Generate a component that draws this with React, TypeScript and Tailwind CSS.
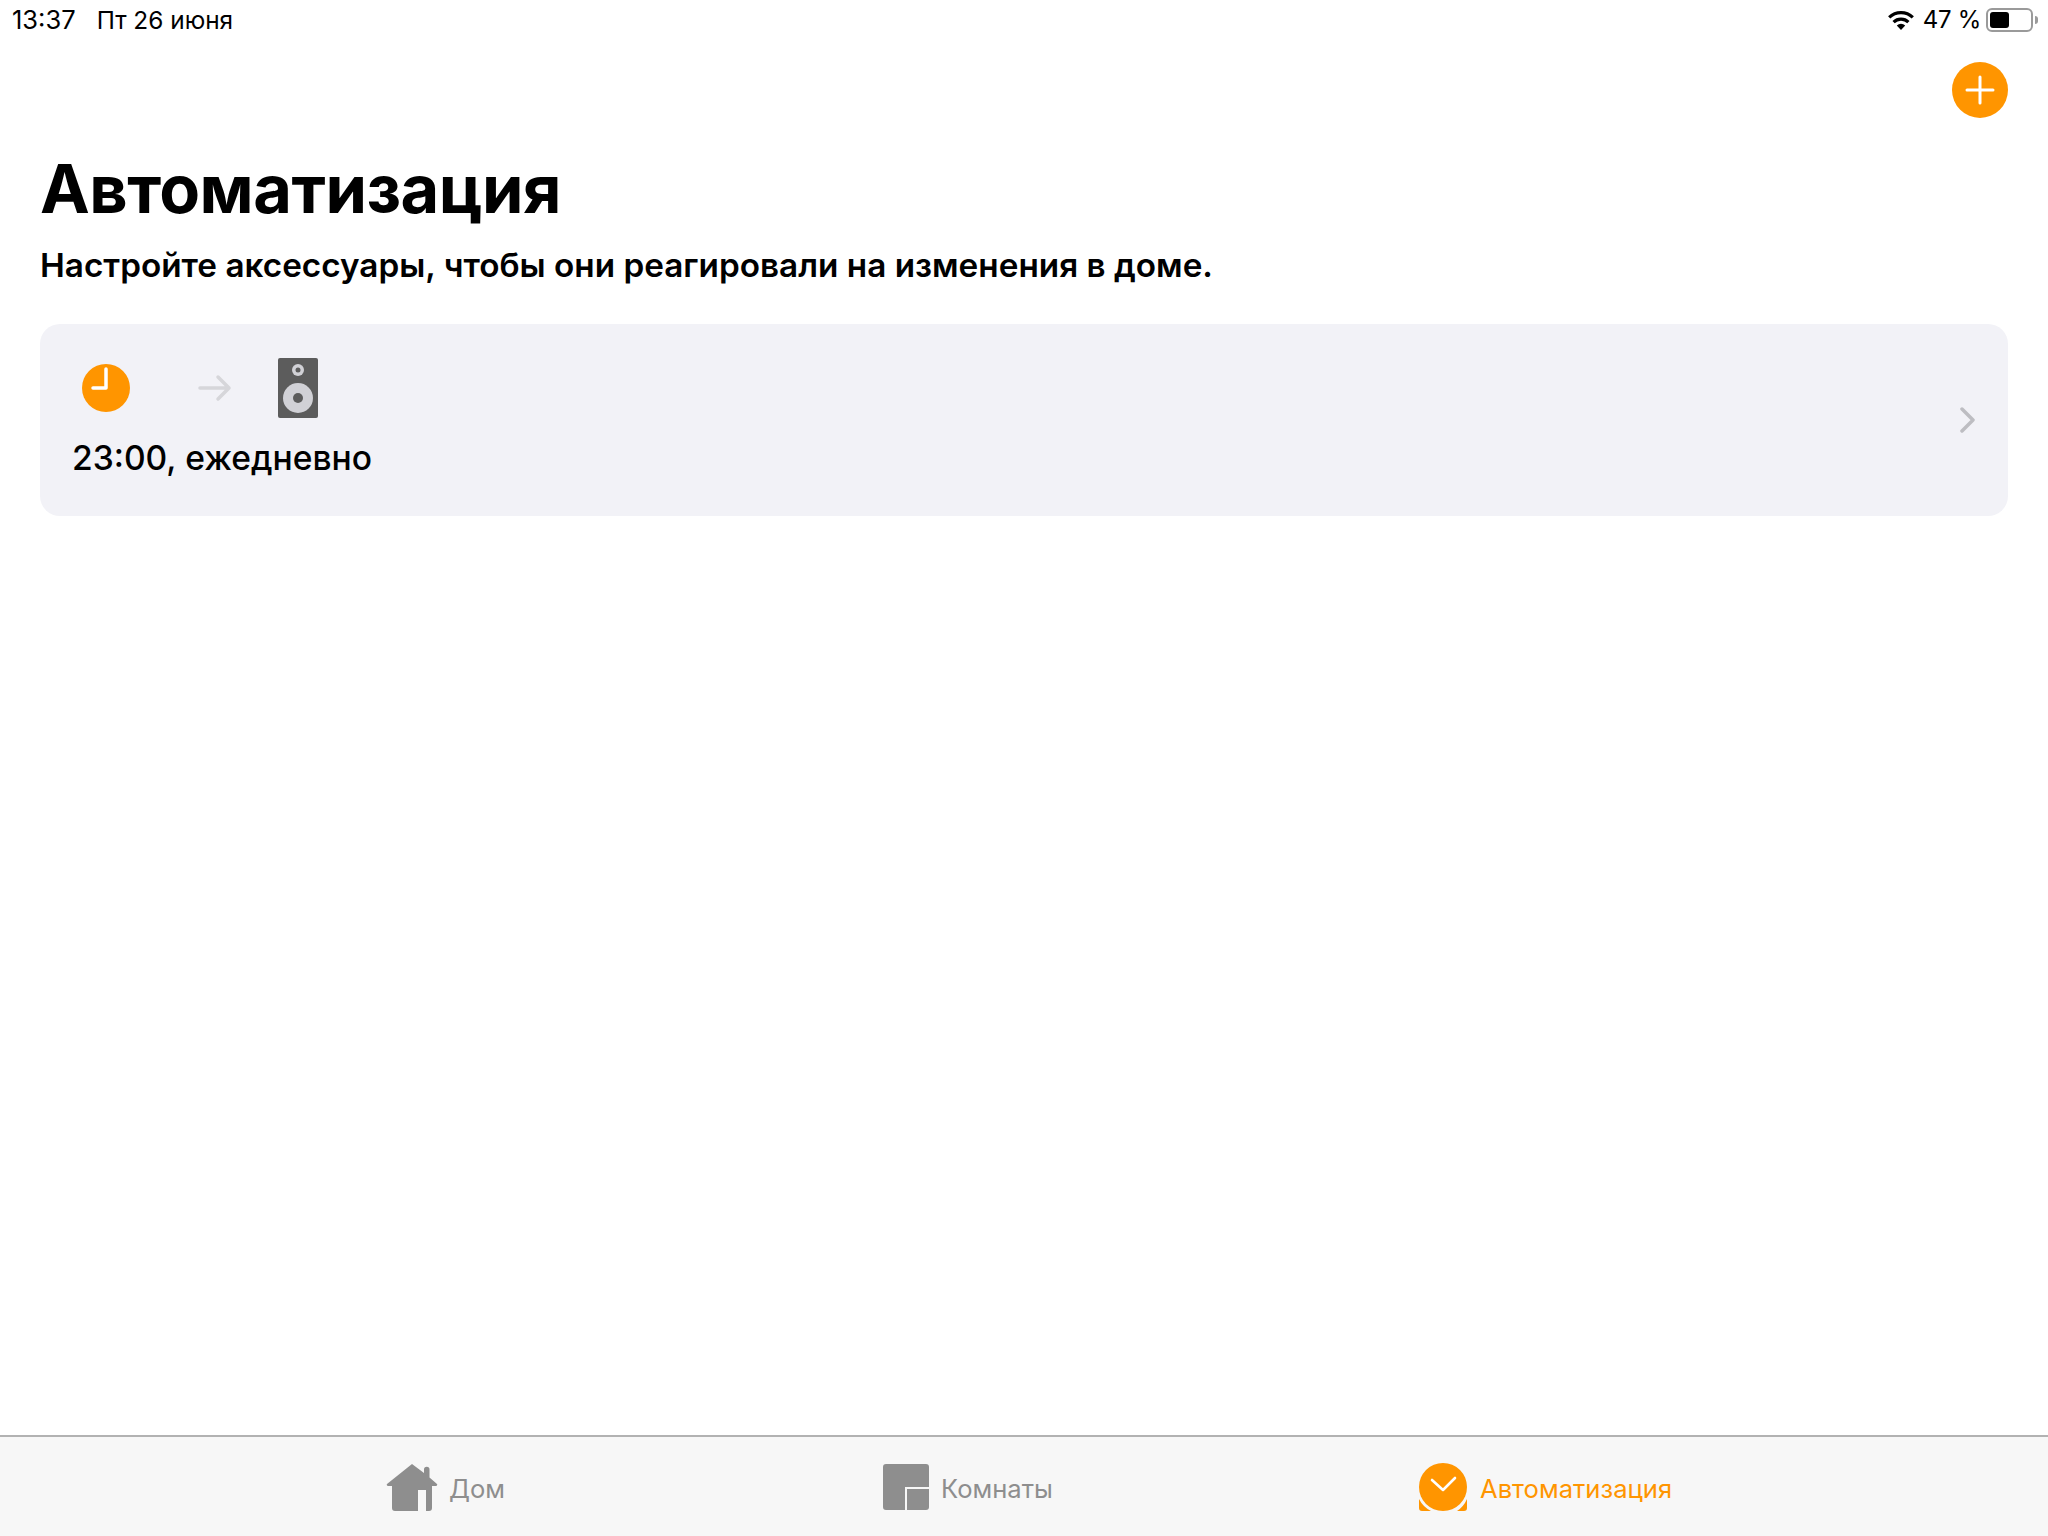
import React from 'react';

const font = { fontFamily: 'Inter, "Liberation Sans", sans-serif' };

const StatusBar = () => (
  <div className="flex h-[40px] items-center justify-between pl-[12px] pr-[10px] leading-[40px] text-black">
    <div className="flex items-center gap-[21px]">
      <span className="text-[25.5px]">13:37</span>
      <span className="text-[24.4px]">Пт 26 июня</span>
    </div>
    <div className="flex items-center">
      <svg width="28" height="22" viewBox="0 0 28 22" className="mr-[8px]">
        <path d="M14 21l-4.2-4.6a6 6 0 0 1 8.4 0z" fill="#000" />
        <path d="M6.6 13.2a10.6 10.6 0 0 1 14.8 0" fill="none" stroke="#000" strokeWidth="3.2" />
        <path d="M2.2 8.4a17 17 0 0 1 23.6 0" fill="none" stroke="#000" strokeWidth="3.2" />
      </svg>
      <span className="text-[24px] tracking-[-0.3px]">47 %</span>
      <div className="ml-[5px] flex h-[24px] w-[47px] items-center rounded-[6px] border-2 border-[#9a9a9a] p-[2px]">
        <div className="h-full w-[19px] rounded-[3px] bg-black" />
      </div>
      <div className="ml-[2px] h-[8px] w-[3px] rounded-r-[3px] bg-[#9a9a9a]" />
    </div>
  </div>
);

const HomeIcon = () => (
  <svg width="52" height="48" viewBox="0 0 52 48">
    <path d="M26 1L38 10V6.5a2.5 2.5 0 0 1 5.500 0V14.500L51 21a1.300 1.300 0 0 1-1 2H46V45a3 3 0 0 1-3 3H9a3 3 0 0 1-3-3V23H2a1.300 1.300 0 0 1-1-2z" fill="#8e8e8e" />
    <rect x="32" y="27" width="8" height="21" fill="#f7f7f7" />
  </svg>
);

const RoomsIcon = () => (
  <svg width="46" height="46" viewBox="0 0 46 46">
    <path d="M3 0H43a3 3 0 0 1 3 3V23H22V46H3a3 3 0 0 1-3-3V3a3 3 0 0 1 3-3z" fill="#8e8e8e" />
    <path d="M24 25H46V43a3 3 0 0 1-3 3H24z" fill="#8e8e8e" />
  </svg>
);

const AutomationIcon = () => (
  <svg width="50" height="48" viewBox="0 0 50 48">
    <path d="M0 36a27 27 0 0 0 12 12H3a3 3 0 0 1-3-3z" fill="#ff9500" />
    <path d="M48 36a27 27 0 0 1-10 12H45a3 3 0 0 0 3-3z" fill="#ff9500" />
    <circle cx="24" cy="24" r="24" fill="#ff9500" />
    <path d="M13 17L24 27L36 15" fill="none" stroke="#fff" strokeWidth="2.600" strokeLinecap="round" strokeLinejoin="round" />
  </svg>
);

const Tab = ({ icon, label, active, className }: { icon: React.ReactNode; label: string; active?: boolean; className: string }) => (
  <div className={`flex items-center ${className}`}>
    {icon}
    <span className={`pt-[6px] text-[25.6px] ${active ? 'text-[#ff9500]' : 'text-[#8e8e8e]'}`}>{label}</span>
  </div>
);

export default function App() {
  return (
    <div className="flex h-[1536px] w-[2048px] flex-col overflow-hidden bg-white" style={font}>
      <StatusBar />
      <div className="flex justify-end pr-[40px] pt-[22px]">
        <div className="flex h-[56px] w-[56px] items-center justify-center rounded-full bg-[#ff9500]">
          <svg width="30" height="30" viewBox="0 0 30 30">
            <path d="M15 2V28M2 15H28" stroke="#fff" strokeWidth="3" strokeLinecap="round" />
          </svg>
        </div>
      </div>
      <main className="flex-1 px-[40px]">
        <h1 className="mt-[35px] text-[66.7px] font-bold leading-[72px] tracking-[-0.5px] text-black">Автоматизация</h1>
        <p className="mt-[18px] text-[33.3px] font-semibold leading-[44px] text-black">
          Настройте аксессуары, чтобы они реагировали на изменения в доме.
        </p>
        <div className="mt-[37px] flex h-[192px] items-center justify-between rounded-[20px] bg-[#f2f2f7] px-[32px]">
          <div className="-mt-[3px]">
            <div className="flex items-center pl-[10px]">
              <svg width="48" height="48" viewBox="0 0 48 48">
                <circle cx="24" cy="24" r="24" fill="#ff9500" />
                <path d="M24 5V24H11" fill="none" stroke="#fff" strokeWidth="3.500" strokeLinecap="round" strokeLinejoin="round" />
              </svg>
              <svg width="34" height="28" viewBox="0 0 34 28" className="ml-[68px]">
                <path d="M2 14H31M20 3L31 14L20 25" fill="none" stroke="#d6d6da" strokeWidth="3.500" strokeLinecap="round" strokeLinejoin="round" />
              </svg>
              <svg width="40" height="60" viewBox="0 0 40 60" className="ml-[46px]">
                <rect width="40" height="60" rx="2" fill="#5c5c5c" />
                <circle cx="20" cy="12" r="6" fill="#d1d1d6" />
                <circle cx="20" cy="12" r="2.500" fill="#5c5c5c" />
                <circle cx="20" cy="40" r="15" fill="#d1d1d6" />
                <circle cx="20" cy="40" r="5" fill="#5c5c5c" />
              </svg>
            </div>
            <div className="mt-[18px] text-[33.6px] font-medium leading-[44px] text-black">23:00, ежедневно</div>
          </div>
          <svg width="16" height="26" viewBox="0 0 16 26">
            <path d="M2 2L13 13L2 24" fill="none" stroke="#bdbdc2" strokeWidth="3.500" strokeLinecap="round" strokeLinejoin="round" />
          </svg>
        </div>
      </main>
      <nav className="flex h-[101px] items-center border-t-2 border-[#b2b2b2] bg-[#f7f7f7]">
        <Tab className="ml-[386px] w-[497px] gap-[11px]" icon={<HomeIcon />} label="Дом" />
        <Tab className="w-[536px] gap-[12px]" icon={<RoomsIcon />} label="Комнаты" />
        <Tab active className="gap-[11px]" icon={<AutomationIcon />} label="Автоматизация" />
      </nav>
    </div>
  );
}
